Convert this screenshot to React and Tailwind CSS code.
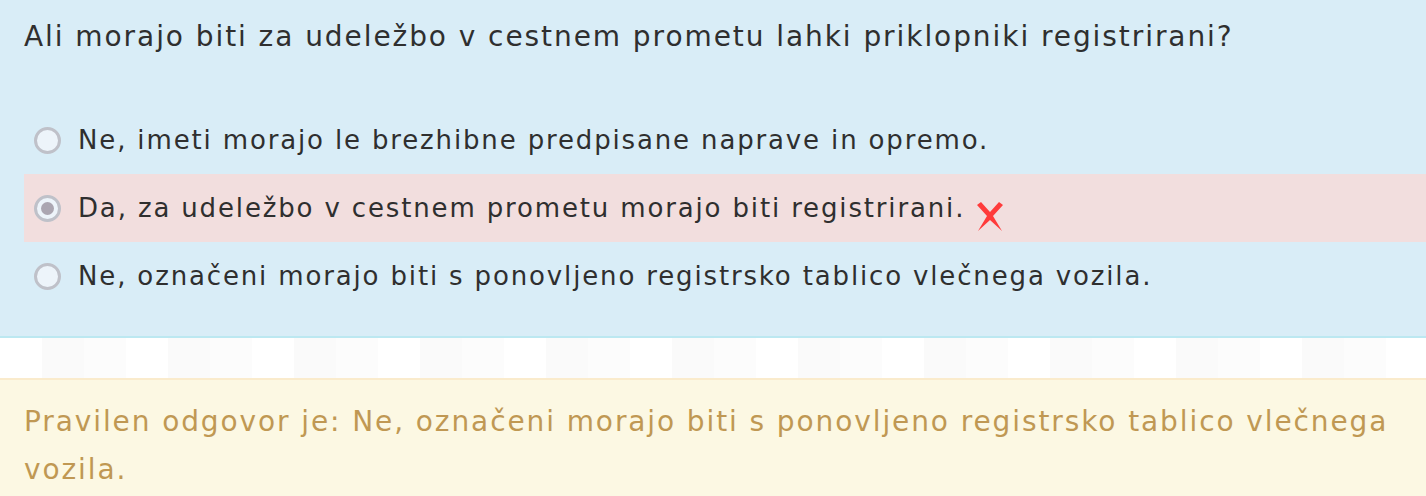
const font = { fontFamily: '"DejaVu Sans", "Noto Sans", sans-serif' }

const options = [
  { id: 1, text: 'Ne, imeti morajo le brezhibne predpisane naprave in opremo.', selected: false, wrong: false },
  { id: 2, text: 'Da, za udeležbo v cestnem prometu morajo biti registrirani.', selected: true, wrong: true },
  { id: 3, text: 'Ne, označeni morajo biti s ponovljeno registrsko tablico vlečnega vozila.', selected: false, wrong: false },
]

function Radio({ checked }) {
  return (
    <span className="mr-[17px] flex h-[27px] w-[27px] shrink-0 items-center justify-center rounded-full border-[3px] border-[#bfc1c9] bg-[#edf4fa]">
      {checked && <span className="h-[13px] w-[13px] rounded-full bg-[#aba6b1]" />}
    </span>
  )
}

function WrongMark() {
  return (
    <svg width="26" height="29" viewBox="0 0 26 29" className="ml-3 mt-4 shrink-0">
      <polygon
        points="0,3 4,0 13,10 22,0 26,3 16,14 25,29 13,18 1,29 10,14"
        fill="#ff3b3b"
      />
    </svg>
  )
}

export default function App() {
  return (
    <div className="w-[1426px] bg-white" style={font}>
      {/* question */}
      <div className="border-b-2 border-[#bce8f1] bg-[#d9edf7] pb-[26px] pl-6 pt-[14px] text-[#2f2f2f]">
        <div className="text-[28px] leading-[46px] tracking-[1.93px]">
          Ali morajo biti za udeležbo v cestnem prometu lahki priklopniki registrirani?
        </div>
        <div className="mt-[46px] text-[26px] tracking-[1.85px]">
          {options.map((o) => (
            <div
              key={o.id}
              className={`flex h-[68px] items-center pl-[10px] ${o.wrong ? 'bg-[#f2dede]' : ''}`}
            >
              <Radio checked={o.selected} />
              <span>{o.text}</span>
              {o.wrong && <WrongMark />}
            </div>
          ))}
        </div>
      </div>

      {/* spacer strip */}
      <div className="grid h-[40px] grid-cols-[repeat(34,42px)]">
        {Array.from({ length: 34 }).map((_, i) => (
          <div key={i} className={i % 3 === 1 ? 'bg-[#fafafa]' : i % 3 === 2 ? 'bg-[#fcfcfc]' : 'bg-white'} />
        ))}
      </div>

      {/* answer */}
      <div className="border-t-2 border-[#faebcc] bg-[#fcf8e3] px-6 pb-6 pt-[18px] text-[28px] leading-[48px] tracking-[1.9px] text-[#c09853]">
        Pravilen odgovor je: Ne, označeni morajo biti s ponovljeno registrsko tablico vlečnega vozila.
      </div>
    </div>
  )
}
